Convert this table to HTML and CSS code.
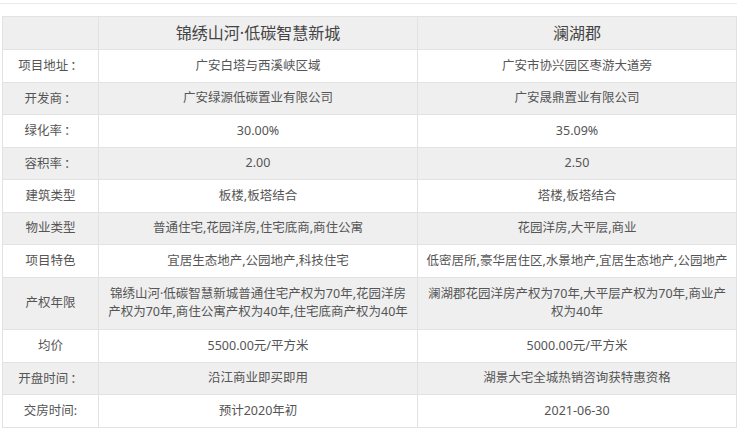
FILE: index.html
```html
<!DOCTYPE html>
<html lang="zh">
<head>
<meta charset="utf-8">
<link rel="stylesheet" href="styles.css">
</head>
<body>
<div class="topline"></div>
<table class="cmp">
  <colgroup><col class="c1"><col class="c2"><col class="c3"></colgroup>
  <thead>
    <tr><th></th><th>锦绣山河·低碳智慧新城</th><th>澜湖郡</th></tr>
  </thead>
  <tbody>
    <tr><td>项目地址<span class="colon">：</span></td><td>广安白塔与西溪峡区域</td><td>广安市协兴园区枣游大道旁</td></tr>
    <tr class="g"><td>开发商<span class="colon">：</span></td><td>广安绿源低碳置业有限公司</td><td>广安晟鼎置业有限公司</td></tr>
    <tr><td>绿化率<span class="colon">：</span></td><td>30.00%</td><td>35.09%</td></tr>
    <tr class="g"><td>容积率<span class="colon">：</span></td><td>2.00</td><td>2.50</td></tr>
    <tr><td>建筑类型</td><td>板楼,板塔结合</td><td>塔楼,板塔结合</td></tr>
    <tr class="g"><td>物业类型</td><td>普通住宅,花园洋房,住宅底商,商住公寓</td><td>花园洋房,大平层,商业</td></tr>
    <tr><td>项目特色</td><td>宜居生态地产,公园地产,科技住宅</td><td>低密居所,豪华居住区,水景地产,宜居生态地产,公园地产</td></tr>
    <tr class="g two"><td>产权年限</td><td>锦绣山河·低碳智慧新城普通住宅产权为70年,花园洋房<br>产权为70年,商住公寓产权为40年,住宅底商产权为40年</td><td>澜湖郡花园洋房产权为70年,大平层产权为70年,商业产<br>权为40年</td></tr>
    <tr><td>均价</td><td>5500.00元/平方米</td><td>5000.00元/平方米</td></tr>
    <tr class="g"><td>开盘时间<span class="colon">：</span></td><td>沿江商业即买即用</td><td>湖景大宅全城热销咨询获特惠资格</td></tr>
    <tr><td>交房时间:</td><td>预计2020年初</td><td>2021-06-30</td></tr>
  </tbody>
</table>
</body>
</html>
```

FILE: styles.css
```css
html, body {
  margin: 0;
  padding: 0;
  background: #fff;
}
body {
  font-family: "Noto Sans", "Noto Sans CJK SC", sans-serif;
  color: #555;
}
.topline {
  height: 3px;
  margin-right: 3px;
  border-bottom: 1px solid #eaeaea;
}
.cmp {
  margin: 12px 0 0 2px;
  width: 734px;
  border-collapse: collapse;
  table-layout: fixed;
}
.c1 { width: 96px; }
.c2 { width: 319px; }
.c3 { width: 319px; }
.cmp th, .cmp td {
  border: 1px solid #e2e2e2;
  text-align: center;
  vertical-align: middle;
  padding: 0 6px;
}
.cmp th {
  background: #efefef;
  font-weight: normal;
  font-size: 16px;
  color: #444;
  height: 32px;
  line-height: 20px;
}
.cmp td {
  font-size: 12.5px;
  line-height: 18px;
  height: 31.5px;
  white-space: nowrap;
}
.cmp tr.two td {
  height: 51.5px;
}
.cmp tr.g td {
  background: #efefef;
}
.colon {
  font-family: "Noto Sans CJK TC", sans-serif;
  padding-left: 2px;
}
```
